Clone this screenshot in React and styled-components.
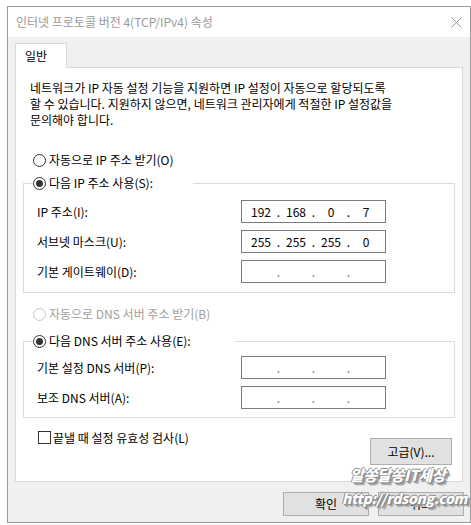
import React from "react";
import styled, { createGlobalStyle } from "styled-components";

const GlobalStyle = createGlobalStyle`
  html, body {
    margin: 0;
    padding: 0;
    background: #fff;
  }
  body {
    font-family: "Noto Sans CJK KR", "Noto Sans", sans-serif;
    font-size: 12px;
    color: #000;
  }
`;

const Page = styled.div`
  position: relative;
  width: 471px;
  height: 525px;
  padding: 6px 0 0 7px;
  box-sizing: border-box;
  overflow: hidden;
  background: #fff;
`;

const Window = styled.div`
  width: 464px;
  height: 517px;
  box-sizing: border-box;
  border: 1px solid #9b9b9b;
  background: #f0f0f0;
  display: flex;
  flex-direction: column;
`;

const TitleBar = styled.div`
  height: 30px;
  flex: none;
  background: #fff;
  display: flex;
  align-items: center;
  justify-content: space-between;
  padding: 0 8px 0 8px;
`;

const Title = styled.span`
  color: #9a9a9a;
  font-size: 12px;
  line-height: 16px;
`;

const Body = styled.div`
  display: flex;
  flex-direction: column;
  padding: 6px 7px 6px;
`;

const TabStrip = styled.div`
  display: flex;
`;

const Tab = styled.div`
  position: relative;
  z-index: 1;
  width: 52px;
  height: 25px;
  box-sizing: border-box;
  border: 1px solid #d9d9d9;
  border-bottom: none;
  background: #fff;
  padding: 4px 0 0 9px;
  line-height: 16px;
`;

const Panel = styled.div`
  margin-top: -1px;
  height: 415px;
  box-sizing: border-box;
  border: 1px solid #d9d9d9;
  background: #fff;
  display: flex;
  flex-direction: column;
`;

const Desc = styled.p`
  margin: 12px 14px 0;
  line-height: 16px;
`;

const RadioRow = styled.label`
  display: flex;
  align-items: center;
  gap: 3px;
  height: 16px;
  line-height: 16px;
  margin-top: ${(p) => p.$top}px;
  padding-left: 17px;
  color: ${(p) => (p.$disabled ? "#a0a0a0" : "#000")};
`;

const Circle = styled.span`
  width: 13px;
  height: 13px;
  box-sizing: border-box;
  border-radius: 50%;
  border: 1px solid ${(p) => (p.$disabled ? "#c8c8c8" : "#333")};
  background: #fff;
  display: flex;
  align-items: center;
  justify-content: center;
  flex: none;

  &::after {
    content: "";
    display: ${(p) => (p.$checked ? "block" : "none")};
    width: 7px;
    height: 7px;
    border-radius: 50%;
    background: #333;
  }
`;

const Group = styled.fieldset`
  margin: ${(p) => p.$top}px 7px 0;
  padding: 0;
  min-width: 0;
  border: 1px solid #dcdcdc;
`;

const Legend = styled.legend`
  margin-left: 9px;
  padding: 0;
  width: ${(p) => p.$width}px;
  height: 16px;
  line-height: 16px;
  display: flex;
  align-items: center;
  gap: 3px;
`;

const Fields = styled.div`
  display: grid;
  grid-template-columns: 204px 145px;
  row-gap: 7px;
  align-items: center;
  padding: ${(p) => p.$pad};
`;

const FieldLabel = styled.span`
  line-height: 16px;
`;

const IpBox = styled.div`
  width: 145px;
  height: 23px;
  box-sizing: border-box;
  border: 1px solid #7a7a7a;
  padding-left: 4px;
  display: flex;
  align-items: center;
  line-height: 16px;
`;

const Octet = styled.span`
  width: 30px;
  text-align: center;
`;

const Dot = styled.span`
  width: 5px;
  text-align: center;
  color: ${(p) => (p.$empty ? "#777" : "#000")};
`;

const BottomRow = styled.div`
  display: flex;
  justify-content: space-between;
  align-items: flex-start;
  margin: 13px 10px 0 22px;
`;

const CheckRow = styled.label`
  display: flex;
  align-items: center;
  gap: 2px;
  height: 13px;
  line-height: 16px;
`;

const CheckBox = styled.span`
  width: 13px;
  height: 13px;
  box-sizing: border-box;
  border: 1px solid #333;
  background: #fff;
  flex: none;
`;

const Button = styled.div`
  width: ${(p) => p.$w}px;
  height: ${(p) => p.$h}px;
  margin-top: ${(p) => p.$top || 0}px;
  box-sizing: border-box;
  border: 1px solid #adadad;
  background: #e1e1e1;
  display: flex;
  align-items: center;
  justify-content: center;
  line-height: 16px;
`;

const Footer = styled.div`
  display: flex;
  justify-content: flex-end;
  gap: 9px;
  margin: 10px -1px 0 0;
`;

const Watermark = styled.div`
  position: absolute;
  left: ${(p) => p.$x}px;
  top: ${(p) => p.$y}px;
  font-family: "Noto Sans CJK KR", "Liberation Sans", sans-serif;
  font-size: ${(p) => p.$size}px;
  font-weight: 900;
  font-style: italic;
  line-height: 1;
  color: #fff;
  letter-spacing: -0.3px;
  text-shadow: -1px 0 0 #8a8a8a, 0 -1px 0 #8a8a8a, 1px 1px 0 #8a8a8a,
    2px 2px 0 #9c9c9c, 3px 3px 0 #b5b5b5;
  pointer-events: none;
`;

const ip = (parts) => {
  const empty = !parts;
  const vals = parts || ["", "", "", ""];
  return (
    <IpBox>
      <Octet>{vals[0]}</Octet>
      <Dot $empty={empty}>.</Dot>
      <Octet>{vals[1]}</Octet>
      <Dot $empty={empty}>.</Dot>
      <Octet>{vals[2]}</Octet>
      <Dot $empty={empty}>.</Dot>
      <Octet>{vals[3]}</Octet>
    </IpBox>
  );
};

const App = () => {
  return (
    <Page>
      <GlobalStyle />
      <Window>
        <TitleBar>
          <Title>인터넷 프로토콜 버전 4(TCP/IPv4) 속성</Title>
          <svg width="11" height="11" viewBox="0 0 11 11">
            <path d="M0.5 0.5 L10.5 10.5 M10.5 0.5 L0.5 10.5" stroke="#9a9a9a" strokeWidth="1" fill="none" />
          </svg>
        </TitleBar>
        <Body>
          <TabStrip>
            <Tab>일반</Tab>
          </TabStrip>
          <Panel>
            <Desc>
              네트워크가 IP 자동 설정 기능을 지원하면 IP 설정이 자동으로 할당되도록
              <br />
              할 수 있습니다. 지원하지 않으면, 네트워크 관리자에게 적절한 IP 설정값을
              <br />
              문의해야 합니다.
            </Desc>

            <RadioRow $top={24}>
              <Circle />
              자동으로 IP 주소 받기(O)
            </RadioRow>

            <Group $top={7}>
              <Legend $width={160}>
                <Circle $checked />
                다음 IP 주소 사용(S):
              </Legend>
              <Fields $pad="9px 0 9px 13px">
                <FieldLabel>IP 주소(I):</FieldLabel>
                {ip(["192", "168", "0", "7"])}
                <FieldLabel>서브넷 마스크(U):</FieldLabel>
                {ip(["255", "255", "255", "0"])}
                <FieldLabel>기본 게이트웨이(D):</FieldLabel>
                {ip(null)}
              </Fields>
            </Group>

            <RadioRow $top={13} $disabled>
              <Circle $disabled />
              자동으로 DNS 서버 주소 받기(B)
            </RadioRow>

            <Group $top={11}>
              <Legend $width={202}>
                <Circle $checked />
                다음 DNS 서버 주소 사용(E):
              </Legend>
              <Fields $pad="7px 0 8px 13px">
                <FieldLabel>기본 설정 DNS 서버(P):</FieldLabel>
                {ip(null)}
                <FieldLabel>보조 DNS 서버(A):</FieldLabel>
                {ip(null)}
              </Fields>
            </Group>

            <BottomRow>
              <CheckRow>
                <CheckBox />
                끝낼 때 설정 유효성 검사(L)
              </CheckRow>
              <Button $w={82} $h={27} $top={7}>
                고급(V)...
              </Button>
            </BottomRow>
          </Panel>
          <Footer>
            <Button $w={86} $h={24}>확인</Button>
            <Button $w={86} $h={24}>취소</Button>
          </Footer>
        </Body>
      </Window>
      <Watermark $x={350} $y={467} $size={15}>
        알쏭달쏭IT세상
      </Watermark>
      <Watermark $x={342} $y={491} $size={14}>
        http://rdsong.com
      </Watermark>
    </Page>
  );
};

export default App;
